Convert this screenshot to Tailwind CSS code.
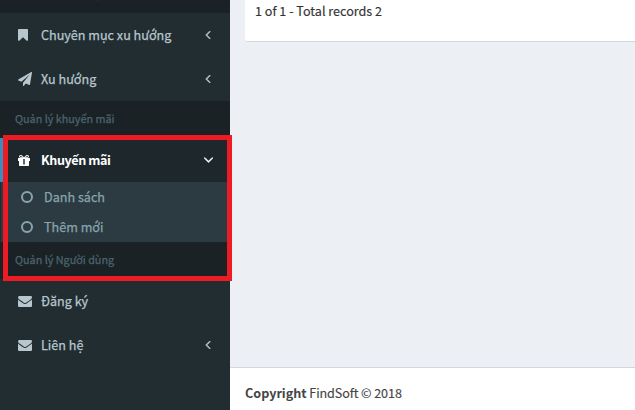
<!DOCTYPE html>
<html lang="vi">
<head>
<meta charset="utf-8">
<title>FindSoft</title>
<script src="https://cdn.jsdelivr.net/npm/@tailwindcss/browser@4"></script>
</head>
<body class="relative flex h-[410px] w-[635px] overflow-hidden bg-[#ecf0f5] font-['Noto_Sans_CJK_SC','Open_Sans',sans-serif] text-[12.6px] leading-5 text-[#333]">
<svg class="hidden">
  <symbol id="left" viewBox="595 468 618 984"><path d="M1203 544q0 13-10 23l-393 393 393 393q10 10 10 23t-10 23l-50 50q-10 10-23 10t-23-10l-466-466q-10-10-10-23t10-23l466-466q10-10 23-10t23 10l50 50q10 10 10 23z"/></symbol>
  <symbol id="mail" viewBox="0 256 1792 1408" preserveAspectRatio="none"><path d="M1792 710v794q0 66-47 113t-113 47h-1472q-66 0-113-47t-47-113v-794q44 49 101 87 362 246 497 345 57 42 92.500 65.500t94.500 48 110 24.500h2q51 0 110-24.500t94.500-48 92.500-65.500q170-123 498-345 57-39 100-87zm0-294q0 79-49 151t-122 123q-376 261-468 325-10 7-42.500 31t-54 38.500-52 32.500-57.500 27-50 9h-2q-23 0-50-9t-57.500-27-52-32.500-54-38.500-42.500-31q-91-64-262-182.500t-205-142.500q-62-42-117-115.500t-55-136.500q0-78 41.500-130t118.500-52h1472q65 0 112.500 47t47.500 113z"/></symbol>
</svg>
<aside class="flex w-[230px] shrink-0 flex-col bg-[#222d32] text-[#b8c7ce] [-webkit-text-stroke:0.25px]">
  <div class="-mt-6 flex h-[37px] shrink-0 items-center bg-[#1a2226] pb-[5px] pl-[14px] text-[10.8px] text-[#4b646f]">Quản lý xu hướng</div>
  <a class="flex h-11 shrink-0 items-center pl-[18px] pr-[19.500px]">
    <svg class="h-[12px] w-[10px] fill-current" viewBox="256 128 1280 1536" preserveAspectRatio="none"><path d="M1420 128q23 0 44 9 33 13 52.500 41t19.500 62v1289q0 34-19.500 62t-52.500 41q-19 8-44 8-48 0-83-32l-441-424-441 424q-36 33-83 33-23 0-44-9-33-13-52.500-41t-19.500-62v-1289q0-34 19.500-62t52.500-41q21-9 44-9h1048z"/></svg>
    <span class="ml-[13px] flex-1 whitespace-nowrap">Chuyên mục xu hướng</span>
    <svg class="h-2 w-[6px] fill-current stroke-current stroke-[50]"><use href="#left"/></svg>
  </a>
  <a class="flex h-11 shrink-0 items-center pl-[18px] pr-[19.500px]">
    <svg class="size-[14px] fill-current" viewBox="0 0 1792 1792"><path d="M1764 11q33 24 27 64l-256 1536q-5 29-32 45-14 8-31 8-11 0-24-5l-453-185-242 295q-18 23-49 23-13 0-22-4-19-7-30.500-23.500t-11.500-36.500v-349l864-1059-1069 925-395-162q-37-14-40-55-2-40 32-59l1664-960q15-9 32-9 20 0 36 11z"/></svg>
    <span class="ml-[9px] flex-1">Xu hướng</span>
    <svg class="h-2 w-[6px] fill-current stroke-current stroke-[50]"><use href="#left"/></svg>
  </a>
  <div class="flex h-[37px] shrink-0 items-center bg-[#1a2226] pb-[3px] pl-[15px] text-[10.8px] text-[#4b646f]">Quản lý khuyến mãi</div>
  <a class="flex h-11 shrink-0 items-center border-l-[3px] border-[#3c8dbc] bg-[#1e282c] pl-[15px] pr-[17px] font-bold text-white">
    <svg class="h-[11px] w-[12px] fill-current" viewBox="0 0 12 11"><path fill-rule="evenodd" d="M0 3.500Q0 3 .5 3H2.700Q1 2.800 1 1.500Q1 0 2.800 0Q4 0 4.700.9L6 2.500L7.300.9Q8 0 9.200 0Q11 0 11 1.500Q11 2.800 9.300 3H11.500Q12 3 12 3.500V6H11V10.300Q11 11 10.300 11H1.700Q1 11 1 10.300V6H0ZM2.800 1Q2 1 2 1.600Q2 2.200 2.800 2.200H4.700L3.900 1.400Q3.500 1 2.800 1ZM9.200 1Q8.500 1 8.100 1.400L7.300 2.200H9.200Q10 2.200 10 1.600Q10 1 9.200 1ZM5.300 4V9.500H6.700V4Z"/></svg>
    <span class="ml-[11px] flex-1 tracking-[-0.4px] [-webkit-text-stroke:0]">Khuyến mãi</span>
    <svg class="h-[6px] w-[9px] fill-current stroke-current stroke-[40]" viewBox="397 653 998 582"><path d="M1395 736q0 13-10 23l-466 466q-10 10-23 10t-23-10l-466-466q-10-10-10-23t10-23l50-50q10-10 23-10t23 10l393 393 393-393q10-10 23-10t23 10l50 50q10 10 10 23z"/></svg>
  </a>
  <div class="mx-px flex h-[60px] shrink-0 flex-col bg-[#2c3b41] pl-5 text-[#8aa4af]">
    <a class="flex h-[30px] items-center gap-[11px]"><span class="size-[12px] rounded-full border-2 border-current"></span><span>Danh sách</span></a>
    <a class="flex h-[30px] items-center gap-[11px]"><span class="size-[12px] rounded-full border-2 border-current"></span><span>Thêm mới</span></a>
  </div>
  <div class="flex h-[37px] shrink-0 items-center bg-[#1a2226] pb-[3px] pl-[15px] text-[10.8px] text-[#4b646f]">Quản lý Người dùng</div>
  <a class="flex h-11 shrink-0 items-center pl-[18px] pr-[19px]">
    <svg class="h-[11px] w-[14px] fill-current"><use href="#mail"/></svg>
    <span class="ml-[9px] flex-1">Đăng ký</span>
  </a>
  <a class="flex h-11 shrink-0 items-center pl-[18px] pr-[19.500px]">
    <svg class="h-[11px] w-[14px] fill-current"><use href="#mail"/></svg>
    <span class="ml-[9px] flex-1">Liên hệ</span>
    <svg class="h-2 w-[6px] fill-current stroke-current stroke-[50]"><use href="#left"/></svg>
  </a>
</aside>
<main class="flex flex-1 flex-col">
  <section class="ml-[15px] h-[42px] rounded-bl-[3px] border-b border-[#d2d6de] bg-white pl-[10px] pt-px [-webkit-text-stroke:0.15px]">1 of 1 - Total records 2</section>
  <footer class="mt-auto h-[43px] border-t border-[#d2d6de] bg-white pl-[15px] pt-[15px] text-[#444]"><strong>Copyright</strong><span class="tracking-[-0.1px] [-webkit-text-stroke:0.15px]"> FindSoft © 2018</span></footer>
</main>
<div class="absolute left-[3px] top-[135px] h-[146px] w-[229px] border-5 border-[#ed1c24]"></div>
</body>
</html>
